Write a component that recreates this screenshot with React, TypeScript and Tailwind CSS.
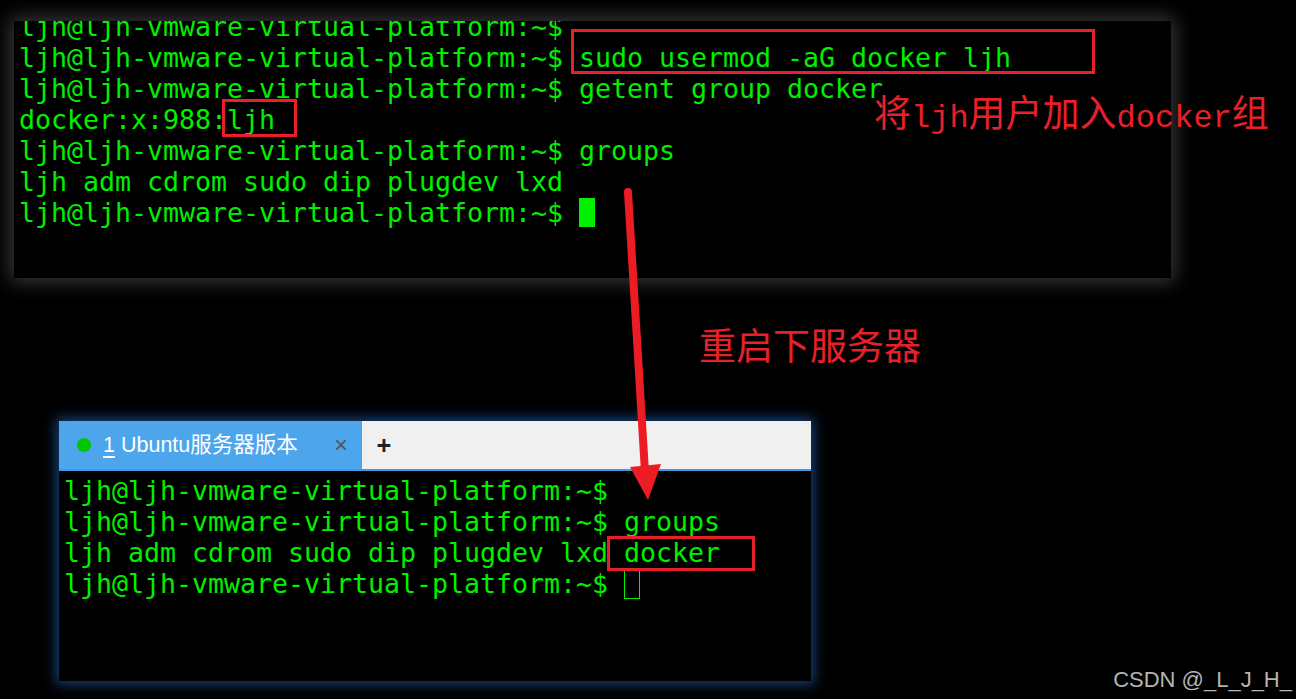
const green = "text-[#00f000]";

const prompt = "ljh@ljh-vmware-virtual-platform:~$";

const TopTerminal = () => (
  <div className="ml-[14px] w-[1157px] h-[257px] bg-black overflow-hidden shadow-[0_0_18px_4px_rgba(255,255,255,0.22)]">
    <div
      className={`-mt-[10px] pl-[5px] ${green} text-[26.58px] leading-[31px] whitespace-pre`}
      style={{ fontFamily: '"DejaVu Sans Mono", monospace' }}
    >
      <div>{prompt}</div>
      <div>{prompt} sudo usermod -aG docker ljh</div>
      <div>{prompt} getent group docker</div>
      <div>docker:x:988:ljh</div>
      <div>{prompt} groups</div>
      <div>ljh adm cdrom sudo dip plugdev lxd</div>
      <div>
        {prompt}{" "}
        <span className="inline-block w-[16px] h-[29px] bg-[#00f000] align-top relative top-[1px]" />
      </div>
    </div>
  </div>
);

const BottomTerminal = () => (
  <div className="mt-[143px] ml-[59px] w-[752px] h-[260px] bg-black flex flex-col shadow-[0_0_12px_3px_rgba(40,120,220,0.55)]">
    {/* tab bar */}
    <div className="flex h-[48px] bg-[#f0f0f0]">
      <div
        className="w-[303px] bg-[#4da6ec] flex items-center text-white text-[21.5px]"
        style={{ fontFamily: '"Liberation Sans", "Noto Sans CJK SC", sans-serif' }}
      >
        <span className="ml-[18px] w-[14px] h-[14px] rounded-full bg-[#00c800]" />
        <span className="ml-[12px]">
          <span className="underline underline-offset-4">1</span> Ubuntu服务器版本
        </span>
        <span className="ml-auto mr-[14px] text-[#555] text-[24px] leading-none font-light">×</span>
      </div>
      <div className="w-[44px] flex items-center justify-center text-[#222] text-[26px] font-bold leading-none">
        +
      </div>
    </div>
    <div className="h-[2px] bg-[#3f9be6]" />
    <div
      className={`pt-[4px] pl-[5px] ${green} text-[26.58px] leading-[31px] whitespace-pre`}
      style={{ fontFamily: '"DejaVu Sans Mono", monospace' }}
    >
      <div>{prompt}</div>
      <div>{prompt} groups</div>
      <div>ljh adm cdrom sudo dip plugdev lxd docker</div>
      <div>
        {prompt}{" "}
        <span className="inline-block w-[16px] h-[30px] border-[1.5px] border-[#00f000] align-top relative top-[1px]" />
      </div>
    </div>
  </div>
);

export default function App() {
  return (
    <div className="relative w-[1296px] h-[699px] bg-black overflow-hidden flex flex-col pt-[21px]">
      <TopTerminal />
      <BottomTerminal />

      {/* red annotation boxes */}
      <div className="absolute left-[571px] top-[29px] w-[524px] h-[45px] border-[3px] border-[#e8202a]" />
      <div className="absolute left-[222px] top-[99px] w-[75px] h-[38px] border-[3px] border-[#e8202a]" />
      <div className="absolute left-[607px] top-[536px] w-[148px] h-[35px] border-[3px] border-[#e8202a]" />

      {/* annotation texts */}
      <div
        className="absolute left-[874px] top-[93px] text-[#e8202a] text-[37px] leading-none whitespace-nowrap"
        style={{ fontFamily: '"Noto Sans CJK SC", serif' }}
      >
        将<span className="text-[32px]" style={{ fontFamily: '"Liberation Mono", monospace' }}>ljh</span>用户加入
        <span className="text-[32px]" style={{ fontFamily: '"Liberation Mono", monospace' }}>docker</span>组
      </div>
      <div
        className="absolute left-[699px] top-[326px] text-[#e8202a] text-[37px] leading-none whitespace-nowrap"
        style={{ fontFamily: '"Noto Sans CJK SC", serif' }}
      >
        重启下服务器
      </div>

      {/* arrow */}
      <svg className="absolute left-0 top-0" width="1296" height="699" viewBox="0 0 1296 699">
        <line x1="628" y1="192" x2="645" y2="472" stroke="#ec1c24" strokeWidth="8" strokeLinecap="round" />
        <polygon points="630,467 661,464 648,500" fill="#ec1c24" />
      </svg>

      {/* watermark */}
      <div
        className="absolute right-[4px] top-[663px] text-[#b4b4b4] text-[22px]"
        style={{ fontFamily: '"Liberation Sans", sans-serif' }}
      >
        CSDN @_L_J_H_
      </div>
    </div>
  );
}
